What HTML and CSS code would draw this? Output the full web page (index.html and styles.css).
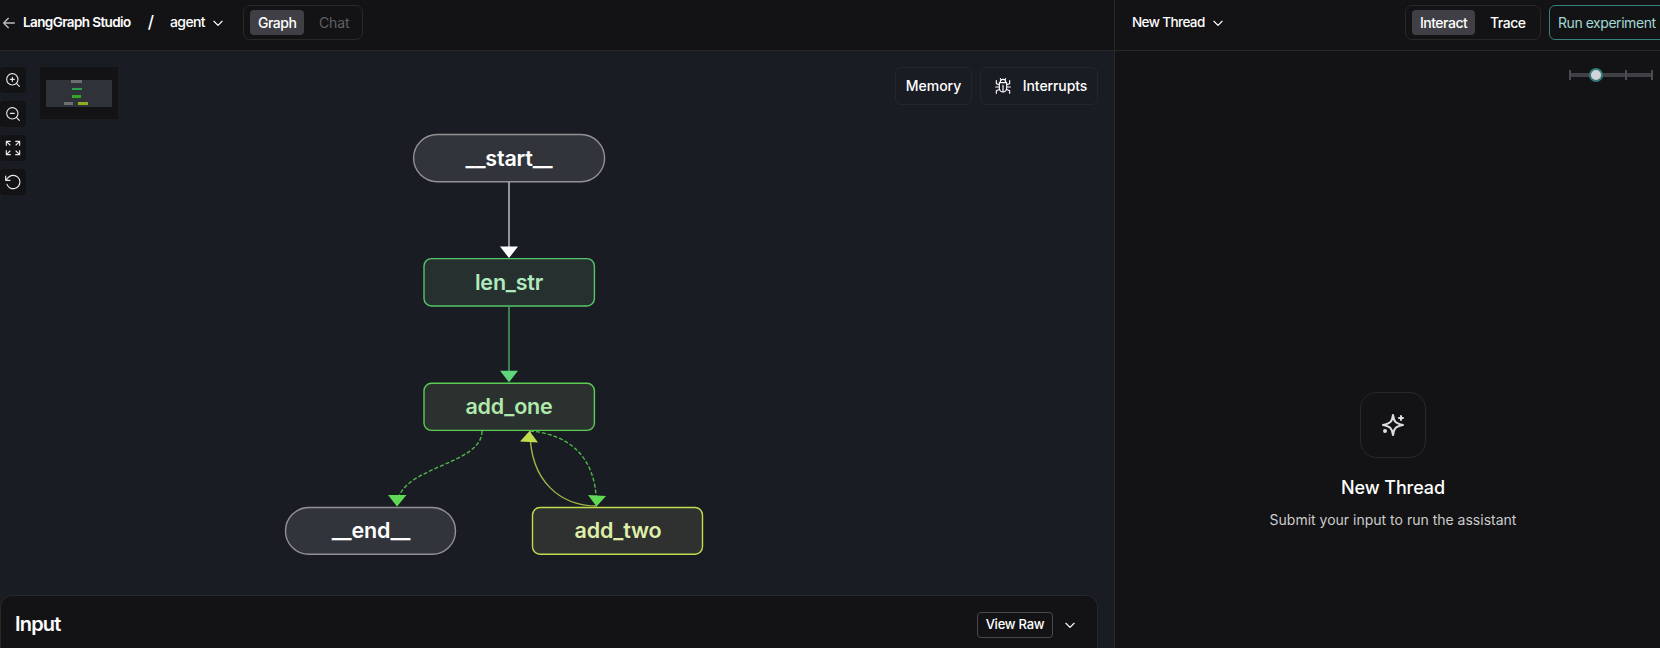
FILE: index.html
```html
<!DOCTYPE html>
<html lang="en">
<head>
<meta charset="utf-8">
<title>LangGraph Studio</title>
<link rel="stylesheet" href="styles.css">
</head>
<body>
<div class="app">
  <section class="main">
    <header class="bar">
      <svg class="back" width="16" height="16" viewBox="0 0 24 24"><path d="M20 12H4M11 5l-7 7 7 7"/></svg>
      <span class="brand">LangGraph Studio</span>
      <span class="slash">/</span>
      <span class="agent">agent</span>
      <svg class="chev" width="14" height="14" viewBox="0 0 24 24"><path d="M5 9l7 7 7-7"/></svg>
      <div class="tabs tabs-left"><span class="tab active">Graph</span><span class="tab muted">Chat</span></div>
    </header>
    <div class="canvas">
      <div class="overlay">
        <div class="tools">
          <button class="tool"><svg width="16" height="16" viewBox="0 0 24 24"><circle cx="11" cy="11" r="8.5"/><path d="M21.5 21.5l-4-4M11 8v6M8 11h6"/></svg></button>
          <button class="tool"><svg width="16" height="16" viewBox="0 0 24 24"><circle cx="11" cy="11" r="8.5"/><path d="M21.5 21.5l-4-4M8 11h6"/></svg></button>
          <button class="tool"><svg width="16" height="16" viewBox="0 0 24 24"><path d="M2 8V2h6M2 2l5.500 5.500M16 2h6v6M22 2l-5.500 5.500M2 16v6h6M2 22l5.500-5.500M22 16v6h-6M22 22l-5.500-5.500"/></svg></button>
          <button class="tool"><svg width="16" height="16" viewBox="0 0 24 24"><path d="M1 3v6.500h6.500M1.500 9.300C5 3.500 9 2 12.500 2a10 10 0 1 1-9.500 13.500"/></svg></button>
        </div>
        <svg class="minimap" width="78" height="52" viewBox="0 0 78 52">
          <rect class="mm-bg" width="78" height="52"/>
          <rect class="mm-view" x="6" y="13" width="66" height="27"/>
          <path class="mm-gray" d="M31 13h11v3H31zM24 35h9v3h-9z"/>
          <path class="mm-green" d="M32 21h10v2H32z"/>
          <path class="mm-lime" d="M32 28h9v3h-9z"/>
          <path class="mm-yellow" d="M38 35h10v3H38z"/>
        </svg>
        <div class="actions">
          <button class="action memory">Memory</button>
          <button class="action interrupts">
            <svg width="16" height="16" viewBox="0 0 24 24"><path d="M8 6a4 4 0 0 1 8 0M6.500 7h11v8.500a5.500 5.500 0 0 1-11 0zM12 11v10M8 1l1.500 2M16 1l-1.500 2M6.500 10L2 8.500V4M17.500 10L22 8.500V4M6.500 13.500H1M17.500 13.500H23M7 17l-5 2v4M17 17l5 2v4"/></svg>
            <span>Interrupts</span>
          </button>
        </div>
      </div>
      <svg class="edges" width="1114" height="597" viewBox="0 51 1114 597">
        <rect class="box gray" x="413.600" y="134.500" width="191" height="47.200" rx="23.600"/>
        <rect class="box green" x="424" y="258.600" width="170.400" height="47.400" rx="7.500"/>
        <rect class="box lime" x="424" y="383.200" width="170.400" height="47.200" rx="7.500"/>
        <rect class="box gray" x="285.500" y="507.500" width="170" height="46.800" rx="23.400"/>
        <rect class="box yellow" x="532.500" y="507.500" width="170" height="46.800" rx="7.500"/>
        <path class="e-white" d="M509 182V248"/>
        <path class="a-white" d="M500 246.500h18l-9 11.500z"/>
        <path class="e-green" d="M509 307V372"/>
        <path class="a-green" d="M500 370.800h18l-9 11.500z"/>
        <path class="e-dash" d="M482 431C482 466 397 466 397 506"/>
        <path class="e-dash" d="M530 431C566 434 596.500 454 596.500 505"/>
        <path class="e-yellow" d="M597 506C561 506 530 482 530 431"/>
        <path class="a-lime" d="M388 495h18.500l-9.500 11.500zM588 495l18 1-9.500 10.500z"/>
        <path class="a-yellow" d="M520 441.500l9.500-10.500 8.500 11.500z"/>
      </svg>
      <div class="node n-start">__start__</div>
      <div class="node n-len">len_str</div>
      <div class="node n-one">add_one</div>
      <div class="node n-end">__end__</div>
      <div class="node n-two">add_two</div>
      <div class="input">
        <h2>Input</h2>
        <button class="raw">View Raw</button>
        <svg class="chev" width="14" height="14" viewBox="0 0 24 24"><path d="M5 9l7 7 7-7"/></svg>
      </div>
    </div>
  </section>
  <aside class="side">
    <header class="bar">
      <span class="thread">New Thread</span>
      <svg class="chev" width="14" height="14" viewBox="0 0 24 24"><path d="M5 9l7 7 7-7"/></svg>
      <div class="tabs tabs-right"><span class="tab active">Interact</span><span class="tab">Trace</span></div>
      <button class="run">Run experiment</button>
    </header>
    <div class="panel">
      <svg class="slider" width="86" height="16" viewBox="0 0 86 16">
        <path class="track" d="M1 8h83"/>
        <path class="ticks" d="M1 3v10M57 3v10M83 3v10"/>
        <circle class="thumb" cx="27" cy="8" r="6"/>
      </svg>
      <div class="empty">
        <div class="spark"><svg width="24" height="24" viewBox="0 0 24 24"><path d="M12 2c1 6.500 2.300 8.500 10 10-7.700 1.500-9 3.500-10 10-1-6.500-2.300-8.500-10-10 7.700-1.500 9-3.500 10-10zM20 3v4M18 5h4"/><circle cx="4" cy="18" r="1"/></svg></div>
        <h3>New Thread</h3>
        <p>Submit your input to run the assistant</p>
      </div>
    </div>
  </aside>
</div>
</body>
</html>
```

FILE: styles.css
```css
* { box-sizing: border-box; }
body { margin: 0; background: #131315; color: #fff; font-family: Inter, "Liberation Sans", sans-serif; font-size: 14px; overflow: hidden; }
button { font: inherit; color: inherit; background: none; margin: 0; padding: 0; }
svg { display: block; flex: none; fill: none; stroke: currentColor; stroke-width: 2; stroke-linecap: round; stroke-linejoin: round; }
h2, h3, p { margin: 0; }
.app { display: flex; width: 1660px; height: 648px; overflow: hidden; }
.main { width: 1114px; flex: none; display: flex; flex-direction: column; }
.side { width: 546px; flex: none; border-left: 1px solid #28282b; display: flex; flex-direction: column; }
.bar { height: 51px; flex: none; display: flex; align-items: flex-start; border-bottom: 1px solid #28282b; white-space: nowrap; font-weight: 500; line-height: 20px; padding-top: 5px; overflow: hidden; }
.bar > span { margin-top: 7px; }
.back { margin: 10px 6px 0 1px; color: #bbb; }
.chev { margin-top: 11px; stroke-width: 2; }
.brand { width: 124px; letter-spacing: -.6px; font-weight: 600; font-size: 13.500px; }
.slash { width: 8px; text-align: center; font-size: 17px; }
.agent { width: 36px; margin-left: 15px; letter-spacing: -.6px; }
.agent + .chev { margin-left: 5px; }
.tabs { display: flex; gap: 5px; padding: 4px 6px; height: 35px; border: 1px solid #28282b; border-radius: 7px; }
.tabs-left { width: 120px; margin-left: 18px; }
.tabs-right { width: 136px; margin-left: auto; }
.tab { height: 25px; line-height: 25px; padding: 0 8px; border-radius: 4px; letter-spacing: -.5px; }
.tabs-left .active { width: 54px; }
.tabs-right .active { width: 63px; }
.active { background: #3f3f45; }
.tab.muted { color: #606067; padding-left: 10px; font-weight: 400; letter-spacing: -.15px; }
.canvas { position: relative; flex: 1; background: #1a1c24; display: flex; flex-direction: column; justify-content: space-between; }
.overlay { display: flex; align-items: flex-start; padding: 16px 16px 0 0; }
.tools { width: 40px; display: flex; flex-direction: column; gap: 8px; }
.tool { width: 26px; height: 26px; border: 0; border-radius: 4px; background: #131315; padding: 5px; color: #e8e8ea; }
.tool svg { stroke-width: 1.700; }
.minimap { stroke: none; }
.mm-bg { fill: #131315; }
.mm-view { fill: #30323a; }
.mm-gray { fill: #6d6d6d; }
.mm-green { fill: #2aa24a; }
.mm-lime { fill: #32a526; }
.mm-yellow { fill: #8eae20; }
.actions { display: flex; gap: 8px; margin-left: auto; font-weight: 500; }
.action { height: 38px; border: 1px solid #24262b; border-radius: 6px; display: flex; align-items: center; justify-content: center; padding-bottom: 1px; }
.memory { width: 77px; }
.interrupts { width: 118px; gap: 12px; padding-left: 4px; letter-spacing: -.1px; }
.interrupts svg { stroke-width: 1.700; }
.edges { position: absolute; left: 0; top: 0; stroke-linecap: butt; stroke-width: 1.400; pointer-events: none; }
.e-white { stroke: #c6c6c8; }
.e-green { stroke: #4bad62; }
.e-dash { stroke: #51b64b; stroke-dasharray: 4 2; }
.e-yellow { stroke: #a1b64b; }
.a-white, .a-green, .a-lime, .a-yellow { stroke: none; fill: #fff; }
.a-green { fill: #5fd67a; }
.a-lime { fill: #60d957; }
.a-yellow { fill: #bede50; }
.box { stroke-width: 1.400; }
.gray { fill: #32343b; stroke: #929294; }
.green { fill: #26302f; stroke: #52c76a; }
.lime { fill: #2a312f; stroke: #5ccc54; }
.yellow { fill: #2e312f; stroke: #bede50; }
.node { position: absolute; width: 172px; height: 48px; font-size: 21.500px; font-weight: 600; display: flex; align-items: center; justify-content: center; letter-spacing: -.2px; }
.n-start { left: 413px; top: 83px; width: 192px; }
.n-len { left: 423px; top: 207px; color: #b0e9bd; }
.n-one { left: 423px; top: 331px; color: #b1e9ac; }
.n-end { left: 285px; top: 455px; }
.n-two { left: 532px; top: 455px; color: #dfeea9; }
.input { position: relative; width: 1098px; height: 53px; border: 1px solid #28282b; border-bottom: 0; border-radius: 12px 12px 0 0; background: #131315; display: flex; align-items: flex-start; padding: 0 20px 0 14px; }
.input h2 { margin-top: 16px; font-size: 20px; line-height: 24px; font-weight: 600; letter-spacing: -.8px; }
.raw { width: 76px; height: 26px; margin: 16px 10px 0 auto; padding-bottom: 2px; border: 1px solid #48484e; border-radius: 4px; font-size: 13px; font-weight: 500; letter-spacing: -.25px; }
.input .chev { margin-top: 22px; }
.thread { margin-left: 17px; width: 73px; font-size: 13.500px; letter-spacing: -.6px; }
.thread + .chev { margin-left: 6px; }
.run { width: 120px; height: 35px; margin: 0 -9px 0 8px; text-align: left; padding-left: 8px; border: 1px solid #38817e; border-radius: 6px; color: #a3d8d4; flex: none; font-weight: 400; font-size: 14px; letter-spacing: -.45px; }
.tabs-right .tab + .tab { padding-left: 10px; }
.panel { flex: 1; display: flex; flex-direction: column; }
.slider { align-self: flex-end; margin: 16px 5px 0 0; stroke-linecap: butt; }
.track { stroke: #3f3f46; stroke-width: 4; }
.ticks { stroke: #4b4b52; stroke-width: 2; }
.thumb { stroke: #347b78; stroke-width: 2; fill: #d4d4d8; }
.empty { display: flex; flex-direction: column; align-items: center; margin-top: 310px; padding-left: 11px; }
.spark { width: 66px; height: 66px; margin-top: -1px; padding: 20px; border: 1px solid #28282b; border-radius: 16px; color: #ddd; }
.spark svg { stroke-width: 2; }
.empty h3 { margin-top: 16px; font-size: 18px; line-height: 28px; font-weight: 500; letter-spacing: -.1px; }
.empty p { margin-top: 8px; font-size: 14px; line-height: 20px; color: #ccc; }
```
